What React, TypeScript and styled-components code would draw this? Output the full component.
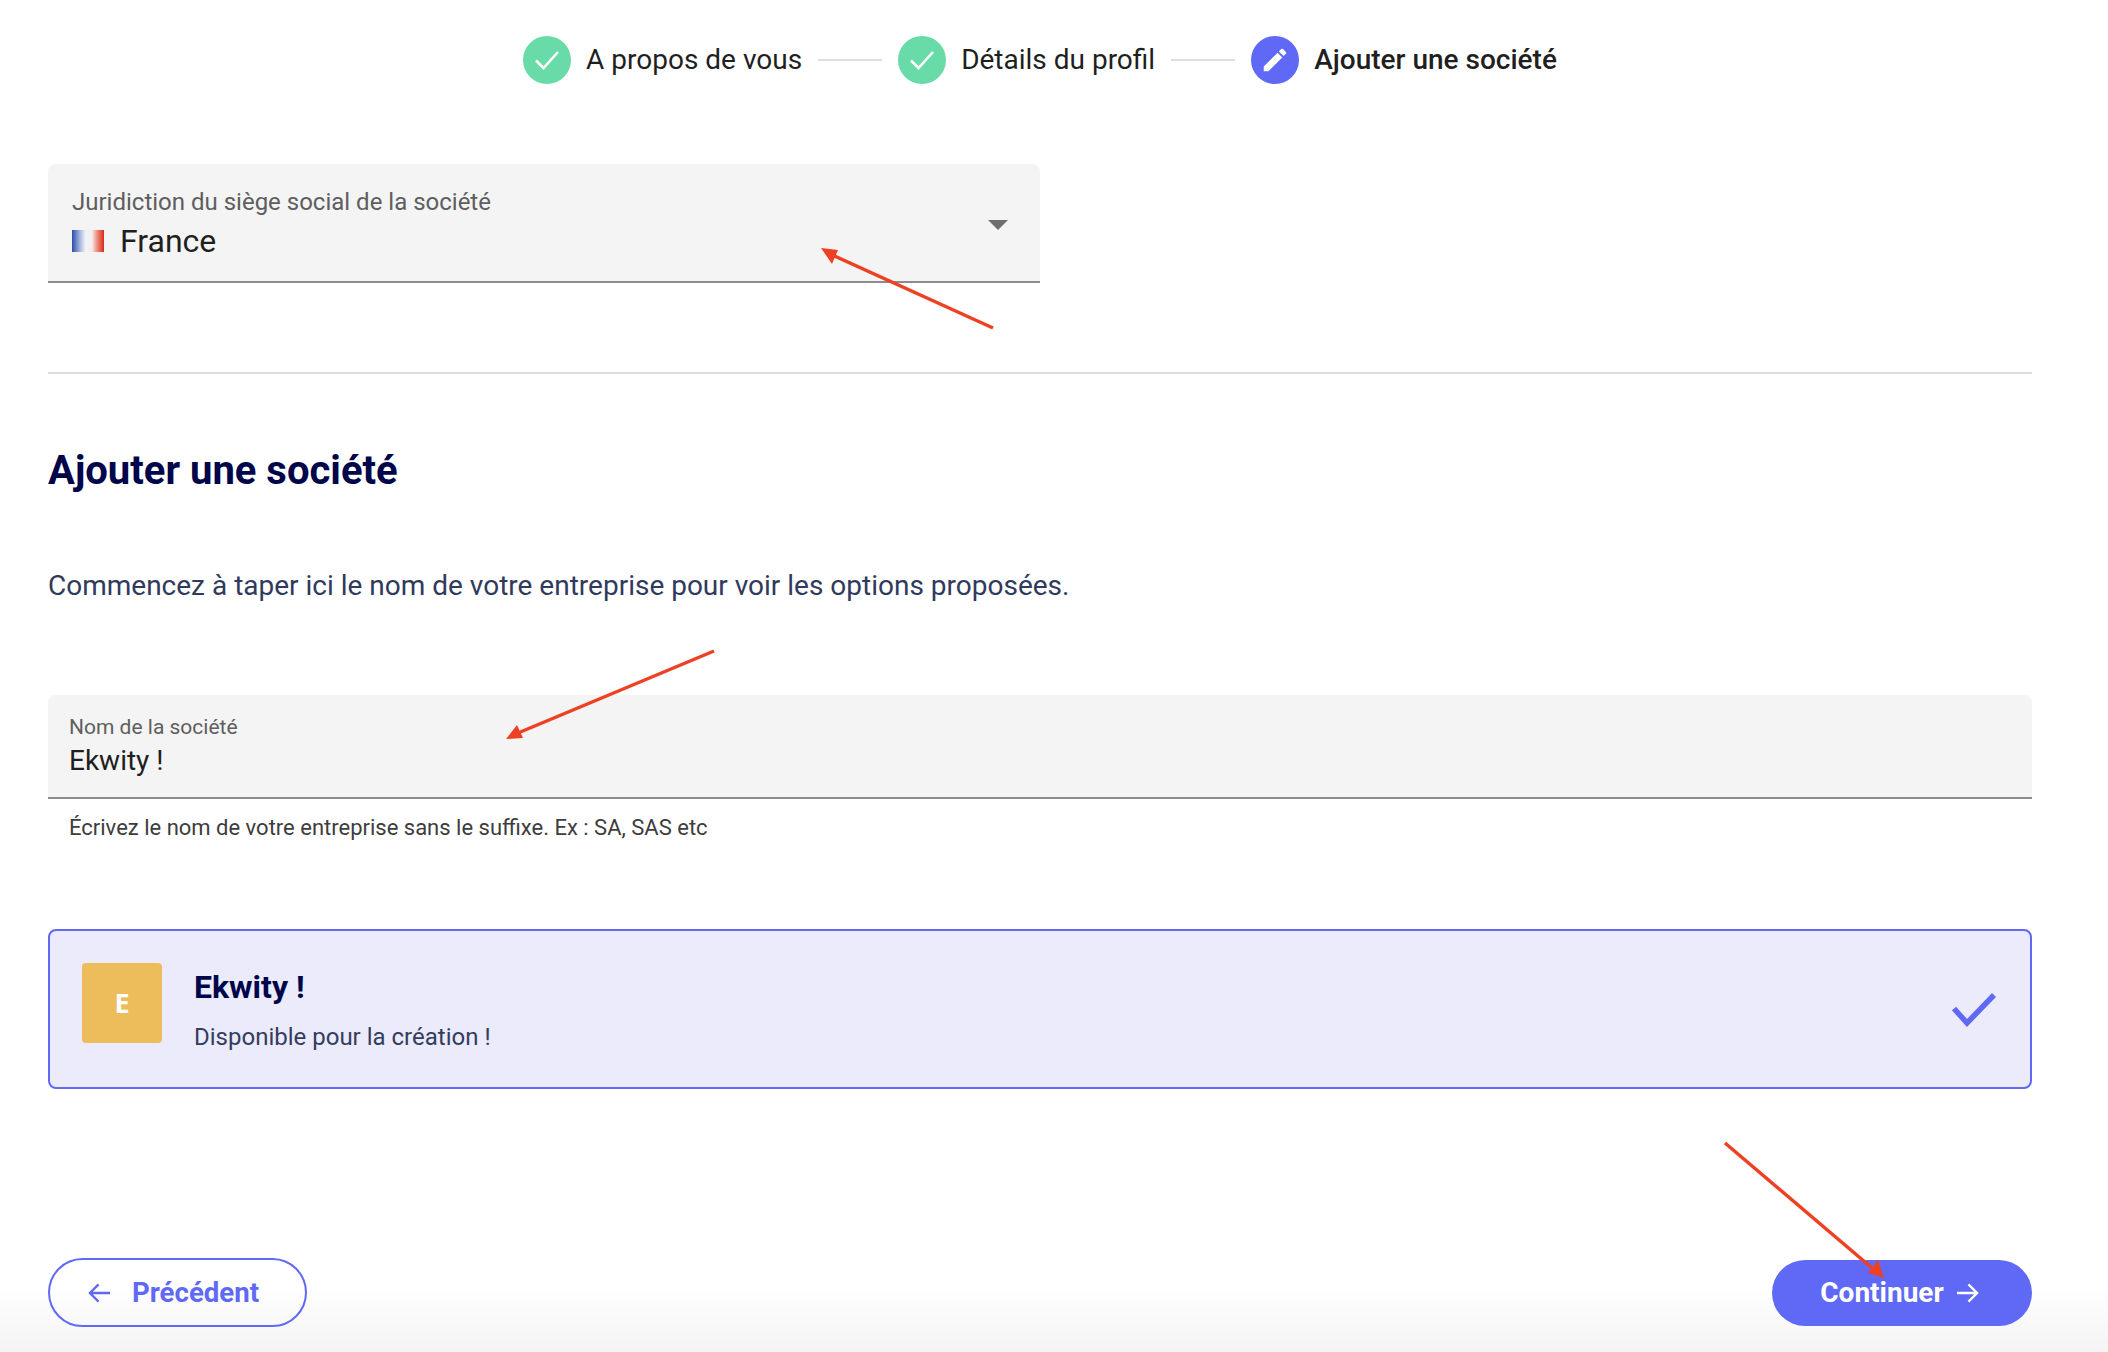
import React from "react";
import styled, { createGlobalStyle } from "styled-components";

const Global = createGlobalStyle`
  html, body { margin: 0; padding: 0; background: #fff; }
  body { font-family: Roboto, "Liberation Sans", sans-serif; }
  * { box-sizing: border-box; }
`;

const Page = styled.div`
  position: relative;
  width: 2108px;
  height: 1352px;
  overflow: hidden;
  padding: 36px 76px 0 48px;
  display: flex;
  flex-direction: column;
  background: linear-gradient(to bottom, #fff 0, #fff 1285px, #f4f4f4 1352px);
`;

const Stepper = styled.div`
  display: flex;
  justify-content: center;
  align-items: center;
  height: 48px;
`;

const Step = styled.div`
  display: flex;
  align-items: center;
  gap: 15px;
`;

const StepCircle = styled.span<{ $active?: boolean }>`
  width: 48px;
  height: 48px;
  border-radius: 50%;
  display: flex;
  align-items: center;
  justify-content: center;
  background: ${(p) => (p.$active ? "#6069f6" : "#68dba8")};
`;

const StepLabel = styled.span<{ $active?: boolean }>`
  font-size: 28px;
  line-height: 48px;
  font-weight: ${(p) => (p.$active ? 500 : 400)};
  color: #1f1f1f;
`;

const StepLine = styled.span`
  width: 64px;
  height: 2px;
  margin: 0 16px;
  background: #dedede;
`;

const SelectField = styled.div`
  position: relative;
  margin-top: 80px;
  width: 992px;
  height: 119px;
  padding: 21px 24px 0;
  background: #f4f4f4;
  border-radius: 8px 8px 0 0;
  border-bottom: 2px solid #8c8c8c;
`;

const SelectLabel = styled.div`
  font-size: 24px;
  line-height: 34px;
  color: #5e5e5e;
`;

const SelectValue = styled.div`
  display: flex;
  align-items: center;
  gap: 16px;
  font-size: 32px;
  line-height: 42px;
  margin-top: 1px;
  color: #1f1f1f;
`;

const Flag = styled.span`
  width: 32px;
  height: 22px;
  background: linear-gradient(
    to right,
    #2a4da8 0,
    #a9bbe2 26%,
    #f1f1f4 42%,
    #f4eeee 62%,
    #ec9c8c 76%,
    #d92a16 100%
  );
`;

const Caret = styled.span`
  position: absolute;
  right: 32px;
  top: 56px;
  width: 0;
  height: 0;
  border-left: 10px solid transparent;
  border-right: 10px solid transparent;
  border-top: 10px solid #6e6e6e;
`;

const Divider = styled.div`
  height: 2px;
  margin-top: 89px;
  background: #dedede;
`;

const Heading = styled.h1`
  margin: 73px 0 0;
  font-size: 40px;
  line-height: 48px;
  font-weight: 700;
  color: #00064a;
`;

const Lead = styled.p`
  margin: 71px 0 0;
  font-size: 28px;
  line-height: 40px;
  color: #2f3a5c;
`;

const NameField = styled.div`
  margin-top: 89px;
  height: 104px;
  padding: 18px 21px 0;
  background: #f4f4f4;
  border-radius: 8px 8px 0 0;
  border-bottom: 2px solid #8c8c8c;
`;

const NameLabel = styled.div`
  font-size: 21px;
  line-height: 28px;
  color: #5e5e5e;
`;

const NameValue = styled.div`
  margin-top: 1px;
  font-size: 28px;
  line-height: 38px;
  color: #1f1f1f;
`;

const Helper = styled.div`
  margin-top: 15px;
  padding-left: 21px;
  font-size: 22px;
  line-height: 28px;
  color: #3d3d3d;
`;

const ResultCard = styled.div`
  margin-top: 87px;
  height: 160px;
  padding: 32px 34px 0 32px;
  display: flex;
  background: #ecebfb;
  border: 2px solid #6069f6;
  border-radius: 8px;
`;

const Logo = styled.div`
  flex: none;
  width: 80px;
  height: 80px;
  padding-bottom: 2px;
  border-radius: 4px;
  display: flex;
  align-items: center;
  justify-content: center;
  background: #edbc5b;
  color: #fff;
  font-family: "Open Sans", Roboto, sans-serif;
  font-size: 27px;
  font-weight: 700;
`;

const ResultText = styled.div`
  margin-left: 32px;
  padding-top: 2px;
  flex: 1;
`;

const ResultTitle = styled.div`
  font-size: 32px;
  line-height: 44px;
  font-weight: 700;
  color: #00064a;
`;

const ResultSub = styled.div`
  margin-top: 11px;
  font-size: 24px;
  line-height: 34px;
  color: #333d5e;
`;

const ResultCheck = styled.svg`
  flex: none;
  margin-top: 30px;
  width: 44px;
  height: 34px;
`;

const Footer = styled.div`
  margin-top: auto;
  margin-bottom: 25px;
  display: flex;
  justify-content: space-between;
  align-items: center;
`;

const BackButton = styled.button`
  width: 259px;
  height: 69px;
  border-radius: 35px;
  border: 2px solid #6069f6;
  background: transparent;
  color: #6069f6;
  font-family: inherit;
  font-size: 27.6px;
  font-weight: 700;
  display: flex;
  align-items: center;
  justify-content: center;
  gap: 21px;
  padding: 0 8px 0 0;
`;

const NextButton = styled.button`
  width: 260px;
  height: 66px;
  border-radius: 33px;
  border: 0;
  background: #6069f6;
  color: #fff;
  font-family: inherit;
  font-size: 28px;
  font-weight: 700;
  display: flex;
  align-items: center;
  justify-content: center;
  gap: 12px;
  padding: 0 5px 0 0;
`;

const Annotations = styled.svg`
  position: absolute;
  left: 0;
  top: 0;
  width: 2108px;
  height: 1352px;
  pointer-events: none;
`;

const Tick = () => (
  <svg width="26" height="22" viewBox="0 0 26 22" fill="none">
    <path d="M2 11.5 L9.5 19 L24 3" stroke="#fff" strokeWidth="2.6" />
  </svg>
);

const Pencil = () => (
  <svg width="30" height="30" viewBox="0 0 24 24" fill="#fff">
    <path d="M3 17.25V21h3.75L17.81 9.94l-3.75-3.75L3 17.25zM20.71 7.04a1 1 0 0 0 0-1.41l-2.34-2.34a1 1 0 0 0-1.41 0l-1.83 1.83 3.75 3.75 1.83-1.83z" />
  </svg>
);

const Arrow = ({ dir }: { dir: "left" | "right" }) => (
  <svg width="23" height="22" viewBox="0 0 24 22" fill="none" stroke="currentColor" strokeWidth="2.4">
    {dir === "left" ? <path d="M23 11H2M11 2l-9 9 9 9" /> : <path d="M1 11h21M13 2l9 9-9 9" />}
  </svg>
);

const RedArrow = ({ x1, y1, x2, y2, head }: { x1: number; y1: number; x2: number; y2: number; head: string }) => (
  <g>
    <line x1={x1} y1={y1} x2={x2} y2={y2} stroke="#ee4123" strokeWidth="3.5" />
    <polygon points={head} fill="#ee4123" />
  </g>
);

export default function App() {
  return (
    <Page>
      <Global />
      <Stepper>
        <Step>
          <StepCircle><Tick /></StepCircle>
          <StepLabel>A propos de vous</StepLabel>
        </Step>
        <StepLine />
        <Step>
          <StepCircle><Tick /></StepCircle>
          <StepLabel>Détails du profil</StepLabel>
        </Step>
        <StepLine />
        <Step>
          <StepCircle $active><Pencil /></StepCircle>
          <StepLabel $active>Ajouter une société</StepLabel>
        </Step>
      </Stepper>

      <SelectField>
        <SelectLabel>Juridiction du siège social de la société</SelectLabel>
        <SelectValue><Flag />France</SelectValue>
        <Caret />
      </SelectField>

      <Divider />

      <Heading>Ajouter une société</Heading>
      <Lead>Commencez à taper ici le nom de votre entreprise pour voir les options proposées.</Lead>

      <NameField>
        <NameLabel>Nom de la société</NameLabel>
        <NameValue>Ekwity !</NameValue>
      </NameField>
      <Helper>Écrivez le nom de votre entreprise sans le suffixe. Ex : SA, SAS etc</Helper>

      <ResultCard>
        <Logo>E</Logo>
        <ResultText>
          <ResultTitle>Ekwity !</ResultTitle>
          <ResultSub>Disponible pour la création !</ResultSub>
        </ResultText>
        <ResultCheck viewBox="0 0 44 34" fill="none">
          <path d="M2 15.5 L15 30 L42 2" stroke="#6069f6" strokeWidth="5.5" />
        </ResultCheck>
      </ResultCard>

      <Footer>
        <BackButton><Arrow dir="left" />Précédent</BackButton>
        <NextButton>Continuer<Arrow dir="right" /></NextButton>
      </Footer>

      <Annotations viewBox="0 0 2108 1352">
        <RedArrow x1={993} y1={328} x2={830} y2={254} head="821,248 838,250 832,264" />
        <RedArrow x1={714} y1={651} x2={518} y2={733} head="506,739 517,725 523,738" />
        <RedArrow x1={1725} y1={1143} x2={1872} y2={1268} head="1884,1278 1868,1273 1878,1260" />
      </Annotations>
    </Page>
  );
}
